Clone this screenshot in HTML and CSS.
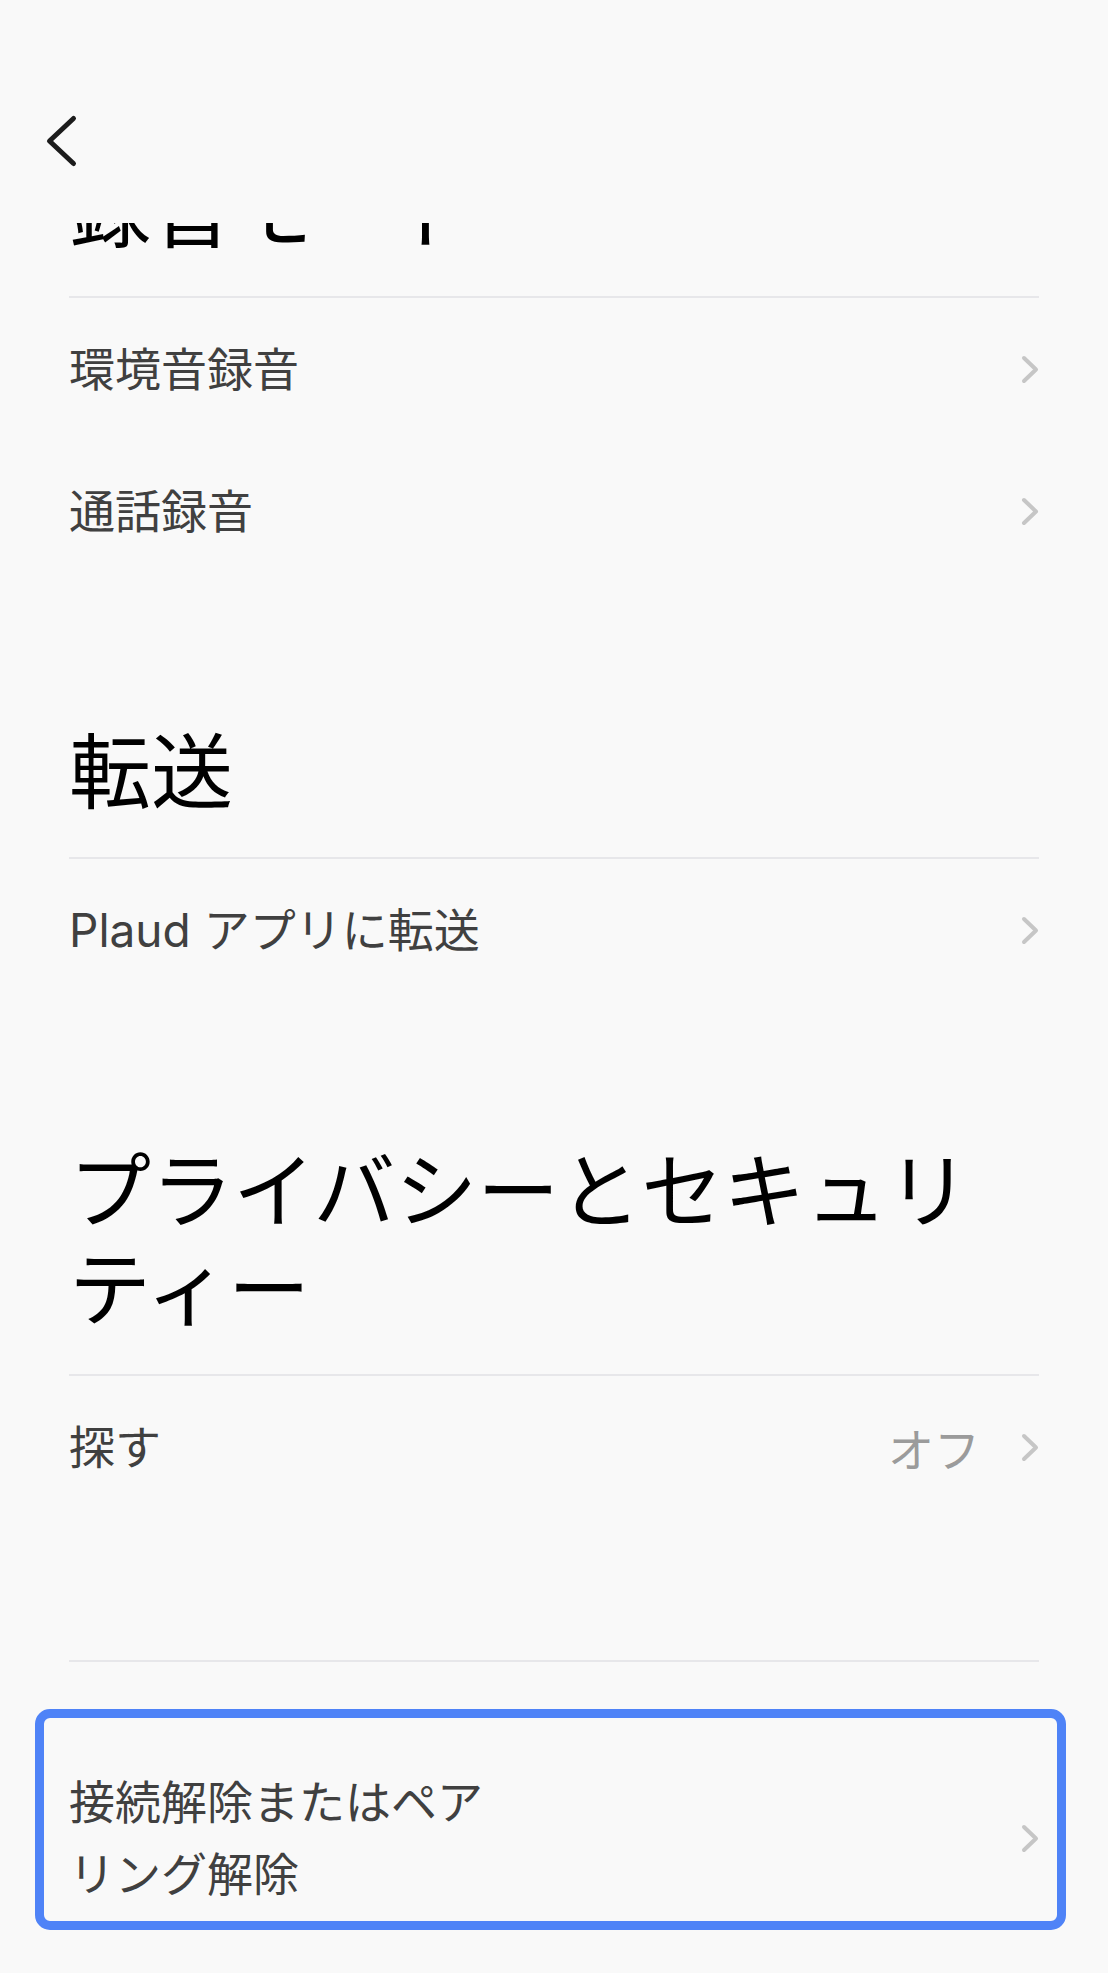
FILE: index.html
```html
<!DOCTYPE html>
<html lang="ja">
<head>
  <meta charset="utf-8">
  <title>デバイス設定</title>
  <link rel="stylesheet" href="styles.css">
</head>
<body>
  <div class="screen">
    <header class="nav">
      <button class="back" type="button" aria-label="戻る">
        <svg width="40" height="60" viewBox="0 0 40 60"><path d="M33.5 8.5 9.5 31l24 22.5" fill="none" stroke="#1c1c1c" stroke-width="5" stroke-linecap="round" stroke-linejoin="round"/></svg>
      </button>
    </header>

    <main class="viewport">
      <div class="content">
        <section class="group">
          <h2 class="group-title">録音モード</h2>
          <div class="row">
            <span class="label">環境音録音</span>
            <svg class="chevron" width="18" height="29" viewBox="0 0 18 29"><path d="M3 3l12 11.5L3 26" fill="none" stroke="#c6c6c6" stroke-width="4" stroke-linecap="round" stroke-linejoin="round"/></svg>
          </div>
          <div class="row">
            <span class="label">通話録音</span>
            <svg class="chevron" width="18" height="29" viewBox="0 0 18 29"><path d="M3 3l12 11.5L3 26" fill="none" stroke="#c6c6c6" stroke-width="4" stroke-linecap="round" stroke-linejoin="round"/></svg>
          </div>
        </section>

        <section class="group">
          <h2 class="group-title">転送</h2>
          <div class="row">
            <span class="label">Plaud アプリに転送</span>
            <svg class="chevron" width="18" height="29" viewBox="0 0 18 29"><path d="M3 3l12 11.5L3 26" fill="none" stroke="#c6c6c6" stroke-width="4" stroke-linecap="round" stroke-linejoin="round"/></svg>
          </div>
        </section>

        <section class="group">
          <h2 class="group-title">プライバシーとセキュリ<br>ティー</h2>
          <div class="row">
            <span class="label">探す</span>
            <span class="value">オフ</span>
            <svg class="chevron" width="18" height="29" viewBox="0 0 18 29"><path d="M3 3l12 11.5L3 26" fill="none" stroke="#c6c6c6" stroke-width="4" stroke-linecap="round" stroke-linejoin="round"/></svg>
          </div>
        </section>

        <section class="group group-plain">
          <div class="row row-focus">
            <span class="label">接続解除またはペア<br>リング解除</span>
            <svg class="chevron" width="18" height="29" viewBox="0 0 18 29"><path d="M3 3l12 11.5L3 26" fill="none" stroke="#c6c6c6" stroke-width="4" stroke-linecap="round" stroke-linejoin="round"/></svg>
          </div>
        </section>
      </div>
    </main>
  </div>
</body>
</html>
```

FILE: styles.css
```css
html,
body {
  margin: 0;
  background-color: #f9f9f9;
}

body {
  font-family: "Inter", "Noto Sans CJK JP", sans-serif;
  width: 1108px;
  height: 1973px;
  overflow: hidden;
}

.screen {
  display: flex;
  flex-direction: column;
  height: 1973px;
}

.nav {
  flex: none;
  height: 223px;
  box-sizing: border-box;
  padding: 110px 0 0 40px;
}

.back {
  display: block;
  border: none;
  background: none;
  padding: 0;
  cursor: pointer;
}

.back svg {
  display: block;
}

/* scrolled list, first title slides under the nav bar */
.viewport {
  flex: 1;
  overflow: hidden;
}

.content {
  margin-top: -60px;
  padding: 0 69px;
}

.group + .group {
  margin-top: 142px;
}

.group-title {
  margin: 0;
  font-size: 82px;
  font-weight: 400;
  line-height: 98px;
  color: #000;
  padding-bottom: 35px;
  border-bottom: 2px solid #e7e7ea;
}

.row {
  display: flex;
  align-items: center;
  height: 142px;
  font-size: 46px;
  color: #404040;
}

.label {
  flex: 1;
  line-height: 72px;
}

.value {
  color: #9b9b9b;
  margin-right: 41px;
}

.chevron {
  flex: none;
  display: block;
}

.group-plain {
  border-top: 2px solid #e7e7ea;
  padding-top: 47px;
}

.row-focus {
  height: auto;
  margin: 0 -27px 0 -34px;
  padding: 48px 18px 11px 25px;
  border: 9px solid #4f83f7;
  border-radius: 15px;
}
```
